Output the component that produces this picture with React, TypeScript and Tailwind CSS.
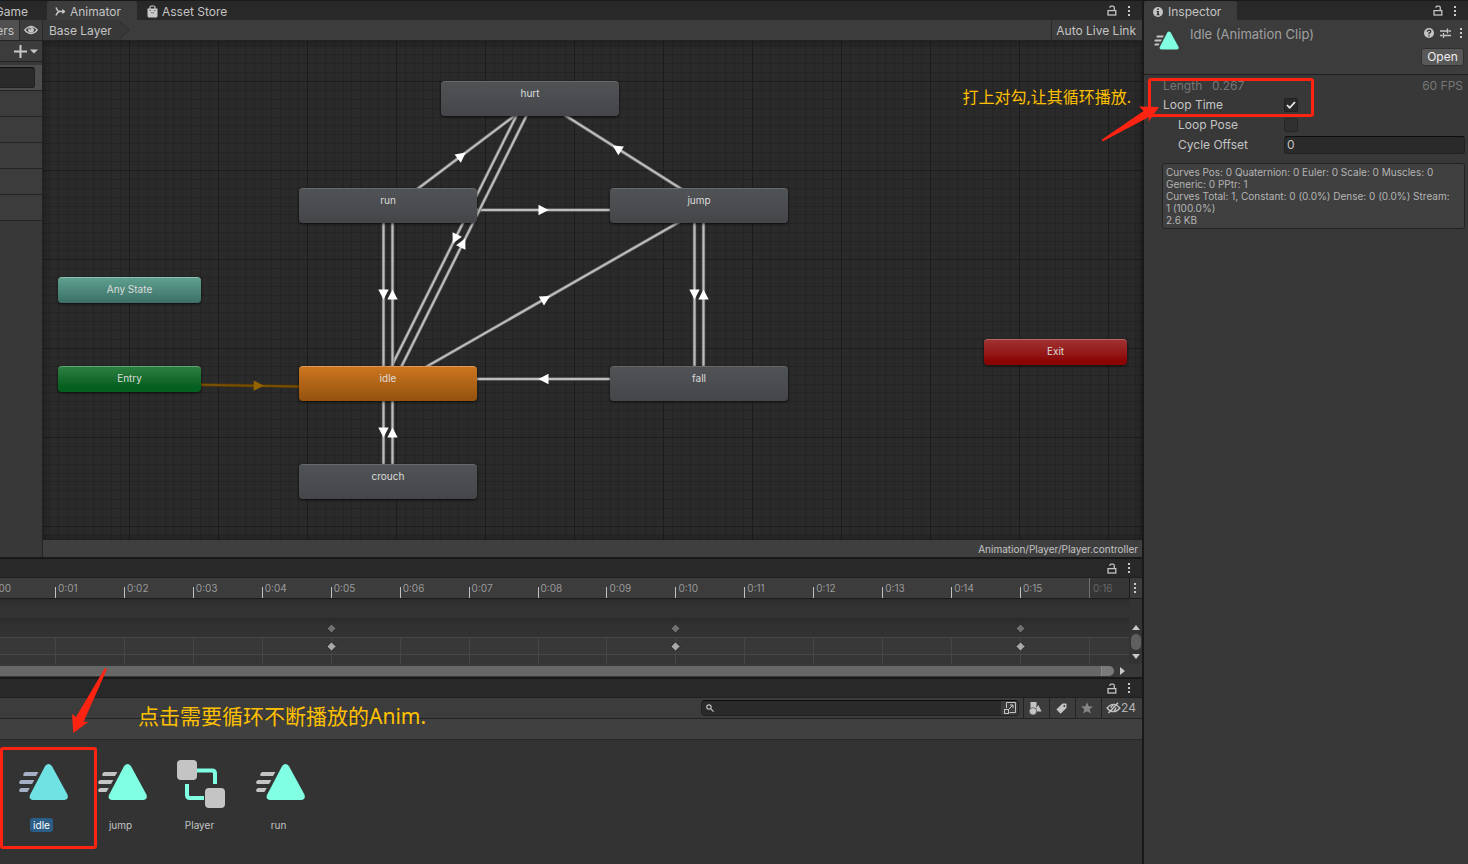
import React from 'react';

type Point = { x: number; y: number };
type StateNode = { id: string; label: string; x: number; y: number; w: number; h: number; tone: string };

const gray = 'bg-linear-to-b from-[#505356] to-[#45464a] border-t-[#68696d]';
const nodes: StateNode[] = [
  { id: 'hurt', label: 'hurt', x: 398, y: 40, w: 178, h: 35, tone: gray },
  { id: 'run', label: 'run', x: 256, y: 147, w: 178, h: 35, tone: gray },
  { id: 'jump', label: 'jump', x: 567, y: 147, w: 178, h: 35, tone: gray },
  { id: 'idle', label: 'idle', x: 256, y: 325, w: 178, h: 35, tone: 'bg-linear-to-b from-[#cc761f] to-[#94520f] border-t-[#e09a55]' },
  { id: 'fall', label: 'fall', x: 567, y: 325, w: 178, h: 35, tone: gray },
  { id: 'crouch', label: 'crouch', x: 256, y: 423, w: 178, h: 35, tone: gray },
  { id: 'any', label: 'Any State', x: 15, y: 236, w: 143, h: 26, tone: 'bg-linear-to-b from-[#5fa08e] to-[#3c7068] border-t-[#8cc0b0]' },
  { id: 'entry', label: 'Entry', x: 15, y: 325, w: 143, h: 26, tone: 'bg-linear-to-b from-[#2b7f40] to-[#04601f] to-80% border-t-[#62a572]' },
  { id: 'exit', label: 'Exit', x: 941, y: 298, w: 143, h: 26, tone: 'bg-linear-to-b from-[#a03030] to-[#8c0505] to-80% border-t-[#c06464]' },
];

const transitions: [string, string][] = [
  ['entry', 'idle'],
  ['run', 'hurt'],
  ['jump', 'hurt'],
  ['run', 'jump'],
  ['hurt', 'idle'],
  ['idle', 'hurt'],
  ['run', 'idle'],
  ['idle', 'run'],
  ['idle', 'jump'],
  ['jump', 'fall'],
  ['fall', 'jump'],
  ['fall', 'idle'],
  ['idle', 'crouch'],
  ['crouch', 'idle'],
];

function center(id: string): Point {
  const n = nodes.find((node) => node.id === id)!;
  return { x: n.x + n.w / 2, y: n.y + n.h / 2 };
}

function Transition({ from, to }: { from: string; to: string }) {
  const a = center(from);
  const b = center(to);
  const len = Math.hypot(b.x - a.x, b.y - a.y);
  const dx = (b.x - a.x) / len;
  const dy = (b.y - a.y) / len;
  const ox = -dy * 4.5;
  const oy = dx * 4.5;
  const mx = (a.x + b.x) / 2 + ox;
  const my = (a.y + b.y) / 2 + oy;
  const angle = (Math.atan2(dy, dx) * 180) / Math.PI;
  const entry = from === 'entry';
  return (
    <g>
      <line x1={a.x + ox} y1={a.y + oy} x2={b.x + ox} y2={b.y + oy} stroke={entry ? '#4a3510' : '#666'} strokeWidth="3.4" />
      <line x1={a.x + ox} y1={a.y + oy} x2={b.x + ox} y2={b.y + oy} stroke={entry ? '#785000' : '#bdbdbd'} strokeWidth="2" />
      <path d="M-5-5.2L5 0L-5 5.2Z" fill={entry ? '#966400' : '#fff'} transform={`translate(${mx} ${my}) rotate(${angle})`} />
    </g>
  );
}

const minor = [9, 18, 27, 36, 44, 53, 62, 71, 80];

function Canvas() {
  return (
    <div className="relative h-[499px] w-full shrink-0 overflow-hidden bg-[#2a2a2a]">
      <svg className="absolute inset-0 h-full w-full" aria-hidden="true">
        <defs>
          <pattern id="grid" x="86" y="40" width="89" height="89" patternUnits="userSpaceOnUse">
            {minor.map((m) => (
              <g key={m} fill="#242424">
                <rect x={m} y="0" width="1" height="89" />
                <rect x="0" y={m} width="89" height="1" />
              </g>
            ))}
            <rect width="1" height="89" fill="#1c1c1c" />
            <rect width="89" height="1" fill="#1c1c1c" />
          </pattern>
        </defs>
        <rect width="100%" height="100%" fill="url(#grid)" />
        {transitions.map(([from, to]) => (
          <Transition key={from + to} from={from} to={to} />
        ))}
      </svg>
      <div className="pointer-events-none absolute inset-0 shadow-[inset_0_0_7px_rgba(0,0,0,0.45)]" />
      {nodes.map((n) => (
        <button
          key={n.id}
          type="button"
          style={{ left: n.x, top: n.y, width: n.w, height: n.h }}
          className={`absolute flex justify-center rounded-[4px] border-t pt-[3px] text-[10px] leading-4 text-[#dcdcdc] shadow-[0_1px_3px_rgba(0,0,0,0.7)] ${n.tone}`}
        >
          {n.label}
        </button>
      ))}
    </div>
  );
}

function LockIcon() {
  return (
    <svg width="10" height="11" viewBox="0 0 10 11" fill="none" stroke="#c4c4c4" strokeWidth="1.3">
      <rect x="1" y="5.6" width="7.8" height="4.4" />
      <path d="M7.3 5.6V2.8Q7.3 1.2 5.7 1.2H4.4Q2.9 1.2 2.9 2.7" />
    </svg>
  );
}

function DotsIcon() {
  return (
    <svg width="4" height="12" viewBox="0 0 4 12" fill="#c8c8c8">
      <rect x="1" y="1" width="2" height="2" />
      <rect x="1" y="5" width="2" height="2" />
      <rect x="1" y="9" width="2" height="2" />
    </svg>
  );
}

function WindowButtons() {
  return (
    <div className="ml-auto flex items-center gap-[10px] pr-[11px]">
      <button type="button" aria-label="Lock"><LockIcon /></button>
      <button type="button" aria-label="Menu"><DotsIcon /></button>
    </div>
  );
}

function ClipIcon({ className, body = '#80ffe3', lines = '#c4c4c4' }: { className: string; body?: string; lines?: string }) {
  return (
    <svg className={className} viewBox="0 0 53 52" aria-hidden="true">
      <path
        d="M30.1 9Q33.5 5 36.9 9L52.4 37.5Q54 42.6 49.5 43H18.2Q13.4 42.6 15 38Z"
        fill={body}
      />
      <g fill={lines}>
        <path d="M10 15H23.4L21 19H8.600Q7.400 17 10 15Z" />
        <path d="M6 23H19.400L17 27H5Q2.800 25 6 23Z" />
        <path d="M6 31H14.800L12.400 35H5Q2.800 33 6 31Z" />
      </g>
    </svg>
  );
}

function ControllerIcon() {
  return (
    <svg className="h-[52px] w-[53px]" viewBox="0 0 53 52" aria-hidden="true">
      <path d="M23 13.500H39Q42 13.500 42 16.500V27" fill="none" stroke="#80ffe3" strokeWidth="4" />
      <path d="M14 27V38Q14 41 17 41H31" fill="none" stroke="#80ffe3" strokeWidth="4" />
      <rect x="4" y="3" width="20" height="20" rx="4" fill="#c4c4c4" />
      <rect x="32" y="31" width="20" height="20" rx="4" fill="#c4c4c4" />
    </svg>
  );
}

function AnimatorPanel() {
  return (
    <section className="flex flex-col">
      <div className="flex h-5 border-t border-[#191919] bg-[#282828] text-[12px] leading-[21px]">
        <button type="button" className="flex w-[47px] justify-end pr-[19px]">Game</button>
        <button type="button" className="flex w-[90px] items-center gap-1 rounded-t-[3px] bg-[#3c3c3c] pt-[2px] pl-2">
          <svg width="11" height="11" viewBox="0 0 11 11" fill="none" stroke="#c8c8c8" strokeWidth="1.4">
            <path d="M1 1.500Q2.500 5.500 5 5.500H9M1 9.500Q2.500 5.500 5 5.500" />
            <path d="M7.300 2.800L10.500 5.500L7.300 8.200Z" fill="#c8c8c8" stroke="none" />
          </svg>
          Animator
        </button>
        <button type="button" className="flex items-center gap-1 pt-[2px] pl-[10px]">
          <svg width="11" height="13" viewBox="0 0 11 13">
            <path d="M3 4V2.500Q3 1 4.300 1H6.700Q8 1 8 2.500V4" fill="none" stroke="#c8c8c8" strokeWidth="1.200" />
            <path d="M.5 3.500H10.500V11Q10.500 12.500 9 12.500H2Q.5 12.500 .5 11Z" fill="#c8c8c8" />
            <path d="M2.500 5.500H4M7 5.500H8.500M4 7.500Q5.500 8.500 7 7.500" stroke="#777" fill="none" />
          </svg>
          Asset Store
        </button>
        <WindowButtons />
      </div>
      <div className="flex h-[21px] border-b border-[#232323] bg-[#3c3c3c] text-[12px] leading-[21px]">
        <button type="button" className="flex w-5 justify-end overflow-hidden border-r border-[#282828] bg-[#505050] pr-[5px]">Layers</button>
        <button type="button" aria-label="Show" className="flex w-[23px] items-center justify-center border-r border-[#282828]">
          <svg width="14" height="10" viewBox="0 0 14 10">
            <path d="M.7 5Q7-2.200 13.300 5Q7 12.200 .7 5Z" fill="none" stroke="#c4c4c4" strokeWidth="1.200" />
            <circle cx="7" cy="4.800" r="2.900" fill="#c4c4c4" />
            <circle cx="6.200" cy="3.800" r=".9" fill="#555" />
          </svg>
        </button>
        <button type="button" className="bg-[#383838] pl-[6px]">Base Layer</button>
        <svg width="18" height="20" viewBox="0 0 18 20">
          <path d="M0 0H7L17 10L7 20H0Z" fill="#383838" />
          <path d="M7 0L17 10L7 20" fill="none" stroke="#2a2a2a" />
        </svg>
        <button type="button" className="ml-auto border-l border-[#282828] px-1 pr-[6px]">Auto Live Link</button>
      </div>
      <div className="flex">
        <aside className="flex w-[43px] shrink-0 flex-col border-r border-[#232323] bg-[#383838]">
          <div className="flex h-[21px] items-center justify-end gap-1 border-b border-[#232323] bg-[#3c3c3c] pr-1">
            <svg width="24" height="13" viewBox="0 0 24 13" fill="#c8c8c8">
              <path d="M5.500 0H7.500V5.500H13V7.500H7.500V13H5.500V7.500H0V5.500H5.500Z" />
              <path d="M16 4.500H24L20 8.500Z" />
            </svg>
          </div>
          <div className="mt-[3px] h-[26px] border-b border-[#232323] bg-[#4d4d4d] pt-[2px] pr-[7px]">
            <input aria-label="Layer name" className="block h-[21px] w-full rounded-r-[3px] border border-l-0 border-[#212121] border-t-[#0d0d0d] bg-[#2a2a2a]" />
          </div>
          {[1, 2, 3, 4, 5].map((row) => (
            <div key={row} className="h-[26px] border-b border-[#232323] bg-[#3c3c3c]" />
          ))}
        </aside>
        <div className="flex min-w-0 flex-1 flex-col">
          <Canvas />
          <div className="h-[17px] bg-[#3f3f3f] pr-1 text-right text-[10px] leading-[18px]">Animation/Player/Player.controller</div>
        </div>
      </div>
    </section>
  );
}

const frames = Array.from({ length: 16 }, (_, i) => i + 1);
const tracks = 'grid grid-cols-[55px_repeat(15,minmax(0,1fr))_40px]';

function KeyRow({ bright }: { bright: boolean }) {
  return (
    <>
      <span />
      {frames.map((f) => (
        <span key={f} className={bright ? 'flex items-center border-l border-[#464646]' : 'flex items-center pl-px'}>
          {f % 5 === 0 && (
            <svg className="relative -left-[6px]" width="11" height="11" viewBox="0 0 11 11">
              <path d="M5.500 .8L10.200 5.500L5.500 10.200L.8 5.500Z" fill={bright ? '#a8a8a8' : '#707070'} stroke="#1c1c1c" />
            </svg>
          )}
        </span>
      ))}
    </>
  );
}

function AnimationPanel() {
  return (
    <section className="border-t-2 border-[#191919]">
      <div className="flex h-[19px] border-b border-[#202020] bg-[#282828]">
        <WindowButtons />
      </div>
      <div className="flex">
        <div className="min-w-0 flex-1">
          <div className={`${tracks} h-[21px] border-b border-[#1c1c1c] bg-[#3c3c3c] text-[10px] leading-[20px] text-[#9a9a9a]`}>
            <span className="flex justify-end overflow-hidden pr-11">0:00</span>
            {frames.map((f) =>
              f === 16 ? (
                <span key={f} className="border-l border-[#707070] bg-[#363636] pl-[3px] text-[#666]">0:16</span>
              ) : (
                <span key={f} className="flex items-end gap-[2px]">
                  <i className="h-[11px] w-px bg-[#c0c0c0]" />
                  <span>{`0:${String(f).padStart(2, '0')}`}</span>
                </span>
              ),
            )}
          </div>
          <div className="h-5 border-b border-[#2b2b2b] bg-linear-to-b from-[#2b2b2b] to-[#323232] to-40%" />
          <div className={`${tracks} h-[18px] bg-linear-to-b from-[#2b2b2b] to-[#323232] to-40%`}>
            <KeyRow bright={false} />
          </div>
          <div className={`${tracks} h-[18px] border-y border-[#464646] bg-[#383838]`}>
            <KeyRow bright />
          </div>
          <div className={`${tracks} h-[9px] bg-[#363636]`}>
            <span />
            {frames.map((f) => (
              <span key={f} className="border-l border-[#464646]" />
            ))}
          </div>
        </div>
        <div className="flex w-[13px] flex-col items-center bg-[#363636]">
          <div className="flex h-[21px] w-full items-center justify-center border-b border-l border-[#1c1c1c] bg-[#3c3c3c] pr-[2px]"><DotsIcon /></div>
          <div className="flex w-full flex-1 flex-col items-center justify-end gap-1 bg-[#333]">
            <svg width="8" height="5" viewBox="0 0 8 5"><path d="M0 5L4 0L8 5Z" fill="#c8c8c8" /></svg>
            <div className="h-4 w-[10px] rounded-full bg-[#5f5f5f]" />
            <svg width="8" height="5" viewBox="0 0 8 5"><path d="M0 0L4 5L8 0Z" fill="#c8c8c8" /></svg>
            <span className="h-px" />
          </div>
        </div>
      </div>
      <div className="flex h-[13px] items-center bg-[#383838] pt-[2px] pb-px">
        <div className="h-[10px] flex-1 bg-[#676767]" />
        <div className="h-[10px] w-[13px] rounded-r-[5px] border-l border-[#8a8a8a] bg-[#7a7a7a]" />
        <svg className="mr-[17px] ml-[6px]" width="5" height="8" viewBox="0 0 5 8"><path d="M0 0L5 4L0 8Z" fill="#c8c8c8" /></svg>
      </div>
    </section>
  );
}

function ProjectPanel() {
  const filter = 'flex w-[26px] items-center justify-center border-l border-[#232323] pr-[3px]';
  return (
    <section className="relative flex flex-1 flex-col border-t-2 border-[#191919] bg-[#333]">
      <div className="flex h-[19px] border-b border-[#202020] bg-[#282828]">
        <WindowButtons />
      </div>
      <div className="flex h-[21px] justify-end border-b border-[#232323] bg-[#3c3c3c]">
        <label className="mt-[2px] mr-1 flex h-4 w-[318px] items-center rounded-[4px] border border-[#212121] border-t-[#0d0d0d] bg-[#2a2a2a] pl-1">
          <svg width="8" height="8" viewBox="0 0 8 8" fill="none" stroke="#c4c4c4" strokeWidth="1.200">
            <circle cx="3" cy="3" r="2.200" />
            <path d="M4.600 4.600L7.600 7.600" />
          </svg>
          <input aria-label="Search" className="min-w-0 flex-1 bg-transparent text-[12px] outline-none" />
          <button type="button" aria-label="Search window" className="flex h-full w-[17px] items-center justify-center rounded-r-[3px] bg-[#3c3c3c]">
            <svg width="12" height="12" viewBox="0 0 12 12" fill="none" stroke="#c4c4c4">
              <path d="M2.500 6V.5H11.500V10.500H5.500" />
              <rect x=".5" y="7.500" width="4" height="4" />
              <path d="M5 7L9 3M6 3H9V6" />
            </svg>
          </button>
        </label>
        <button type="button" aria-label="Filter by type" className={filter}>
          <svg width="13" height="13" viewBox="0 0 13 13" fill="#c4c4c4">
            <path d="M1.500 0H7.500V6H1.500Z" />
            <circle cx="4" cy="9.300" r="3.700" stroke="#3c3c3c" strokeWidth=".6" />
            <path d="M9.300 3L12.600 9.500H8Q7.600 7 7 6.500Z" />
          </svg>
        </button>
        <button type="button" aria-label="Filter by label" className={filter}>
          <svg width="11" height="11" viewBox="0 0 11 11">
            <path fillRule="evenodd" d="M6.500 .6L9.800 .4Q10.600 .5 10.600 1.200L10.400 5L4.600 10.700L.4 6.500ZM8.300 2A1 1 0 1 0 8.300 4A1 1 0 0 0 8.300 2Z" fill="#c4c4c4" />
          </svg>
        </button>
        <button type="button" aria-label="Favorites" className={filter}>
          <svg width="12" height="12" viewBox="0 0 12 12">
            <path d="M6 .3L7.700 4.200L11.900 4.500L8.700 7.300L9.700 11.600L6 9.300L2.300 11.600L3.300 7.300L.1 4.500L4.300 4.200Z" fill="#858585" />
          </svg>
        </button>
        <button type="button" className="flex w-[41px] items-center border-l border-[#232323] pl-1 text-[12px] text-[#b4b4b4]">
          <svg className="shrink-0" width="15" height="12" viewBox="0 0 15 12" fill="none" stroke="#c4c4c4" strokeWidth="1.200">
            <path d="M1 6Q7.500-1.500 14 6Q7.500 13.500 1 6Z" />
            <path d="M5 6Q5 3.500 7.500 3.300M10 5.500Q10 8 7.500 8.500" />
            <path d="M2.500 11L12 .8" strokeWidth="1.500" />
          </svg>
          24
        </button>
      </div>
      <div className="h-[21px] border-b border-[#282828] bg-[#404040]" />
      <div className="flex pt-[17px] pl-[2px] text-[10px] leading-[14px]">
        {['idle', 'jump', 'Player', 'run'].map((name) => (
          <button key={name} type="button" className="flex w-[79px] flex-col items-center gap-[9px]">
            {name === 'Player' ? (
              <ControllerIcon />
            ) : name === 'idle' ? (
              <ClipIcon className="h-[52px] w-[53px]" body="#6fe3e4" lines="#a5afc6" />
            ) : (
              <ClipIcon className="h-[52px] w-[53px]" />
            )}
            <span className={name === 'idle' ? 'rounded-[3px] bg-[#2c5d87] px-[3px] text-white' : ''}>{name}</span>
          </button>
        ))}
      </div>
      <p className="absolute top-[23px] left-[138px] font-['Noto_Sans','Noto_Sans_CJK_SC',sans-serif] text-[21px] leading-[28px] text-[#ffc000]">点击需要循环不断播放的Anim.</p>
      <svg className="absolute -top-3 left-[70px]" width="40" height="68" viewBox="70 667 40 68" aria-hidden="true">
        <path d="M105 668L107 669L83.500 722L88.500 721.700L73.300 733L72 714L76 717Z" fill="#ff2412" />
      </svg>
      <div className="absolute top-[68px] left-0 h-[102px] w-[97px] rounded-[3px] border-3 border-[#ff2412]" />
    </section>
  );
}

function Inspector() {
  return (
    <aside className="relative flex w-[326px] shrink-0 flex-col border-l-2 border-[#191919] bg-[#383838] text-[12px]">
      <div className="flex h-5 border-t border-[#191919] bg-[#282828] leading-[21px]">
        <button type="button" className="flex w-[93px] items-center gap-[5px] rounded-t-[3px] bg-[#3c3c3c] pt-[2px] pl-[9px]">
          <svg width="10" height="10" viewBox="0 0 10 10">
            <circle cx="5" cy="5" r="5" fill="#c4c4c4" />
            <path d="M4.200 1.500H5.800V3H4.200ZM3.600 4H5.800V7.300H6.500V8.300H3.500V7.300H4.300V5H3.600Z" fill="#2b2b2b" />
          </svg>
          Inspector
        </button>
        <WindowButtons />
      </div>
      <header className="flex h-[55px] border-b border-[#1f1f1f] bg-[#3c3c3c] pl-2">
        <ClipIcon className="mt-2 h-[26px] w-[27px]" />
        <h1 className="ml-[11px] pt-[5px] text-[13px] leading-[18px] text-[#a0a0a0]">Idle (Animation Clip)</h1>
        <div className="ml-auto flex flex-col items-end gap-[9px] pt-[7px] pr-1">
          <div className="flex items-center gap-[6px] pr-px">
            <svg width="10" height="12" viewBox="0 0 10 12">
              <circle cx="5" cy="6" r="5" fill="#c4c4c4" />
              <path d="M3.300 4.800Q3.300 3.200 5 3.200Q6.700 3.200 6.700 4.600Q6.700 5.600 5 6.300V7.300M5 8.200V9.500" fill="none" stroke="#2b2b2b" strokeWidth="1.300" />
            </svg>
            <svg width="11" height="12" viewBox="0 0 11 12" fill="none" stroke="#c4c4c4" strokeWidth="1.300">
              <path d="M0 4H7M8.500 4H11M7.500 1.500V6.500M0 8.500H2.500M4 8.500H11M3.500 6V11" />
            </svg>
            <span className="ml-[2px] flex"><DotsIcon /></span>
          </div>
          <button type="button" className="h-[18px] w-[43px] rounded-[3px] border border-[#303030] bg-[#585858] leading-4 text-[#eee]">Open</button>
        </div>
      </header>
      <div className="flex h-5 pt-[2px] pr-[5px] pl-[19px] leading-[18px] text-[#777]">
        <span className="w-[49px]">Length</span>
        <span>0.267</span>
        <span className="ml-auto">60 FPS</span>
      </div>
      <div className="grid grid-cols-[121px_1fr] items-center pr-[3px] pl-[19px] leading-5">
        <label htmlFor="loop-time">Loop Time</label>
        <span className="relative flex h-[14px] w-[14px]">
          <input id="loop-time" type="checkbox" defaultChecked className="peer h-[14px] w-[14px] appearance-none rounded-[2px] border border-[#212121] bg-[#2a2a2a]" />
          <svg className="pointer-events-none absolute inset-0 hidden peer-checked:block" viewBox="0 0 14 14">
            <path d="M3 7L5.700 9.800L11 4" fill="none" stroke="#eee" strokeWidth="1.800" />
          </svg>
        </span>
        <label htmlFor="loop-pose" className="pl-[15px]">Loop Pose</label>
        <input id="loop-pose" type="checkbox" className="h-[14px] w-[14px] appearance-none rounded-[2px] border border-[#262626] bg-[#303030]" />
        <label htmlFor="cycle-offset" className="pl-[15px]">Cycle Offset</label>
        <input id="cycle-offset" defaultValue="0" className="h-[18px] min-w-0 rounded-[3px] border border-[#212121] border-t-[#0d0d0d] bg-[#2a2a2a] px-[2px]" />
      </div>
      <div className="mt-2 mr-[3px] ml-[18px] rounded-[3px] border border-[#232323] bg-[#404040] pt-[2px] pr-3 pb-[2px] pl-[3px] text-[10px] leading-3 text-[#b4b4b4]">
        <p>Curves Pos: 0 Quaternion: 0 Euler: 0 Scale: 0 Muscles: 0 Generic: 0 PPtr: 1</p>
        <p>Curves Total: 1, Constant: 0 (0.0%) Dense: 0 (0.0%) Stream: 1 (100.0%)</p>
        <p>2.6 KB</p>
      </div>
      <p className="absolute top-[86px] right-[337px] font-['Noto_Sans','Noto_Sans_CJK_SC',sans-serif] text-[16px] leading-[22px] whitespace-nowrap text-[#ffc000]">打上对勾,让其循环播放.</p>
      <div className="absolute top-[78px] left-1 h-[39px] w-[166px] rounded-[3px] border-3 border-[#ff2412]" />
      <svg className="absolute top-[100px] -left-[44px]" width="62" height="44" viewBox="1100 100 62 44" aria-hidden="true">
        <path d="M1102 139.500L1102.500 141.500L1149 117L1148.300 122L1159 107L1139.300 106.500L1143.500 111Z" fill="#ff2412" />
      </svg>
    </aside>
  );
}

export default function App() {
  return (
    <main className="flex min-h-screen overflow-hidden bg-[#191919] font-['Inter','Noto_Sans_CJK_SC',sans-serif] text-[#c4c4c4]">
      <div className="flex min-w-0 flex-1 flex-col">
        <AnimatorPanel />
        <AnimationPanel />
        <ProjectPanel />
      </div>
      <Inspector />
    </main>
  );
}
